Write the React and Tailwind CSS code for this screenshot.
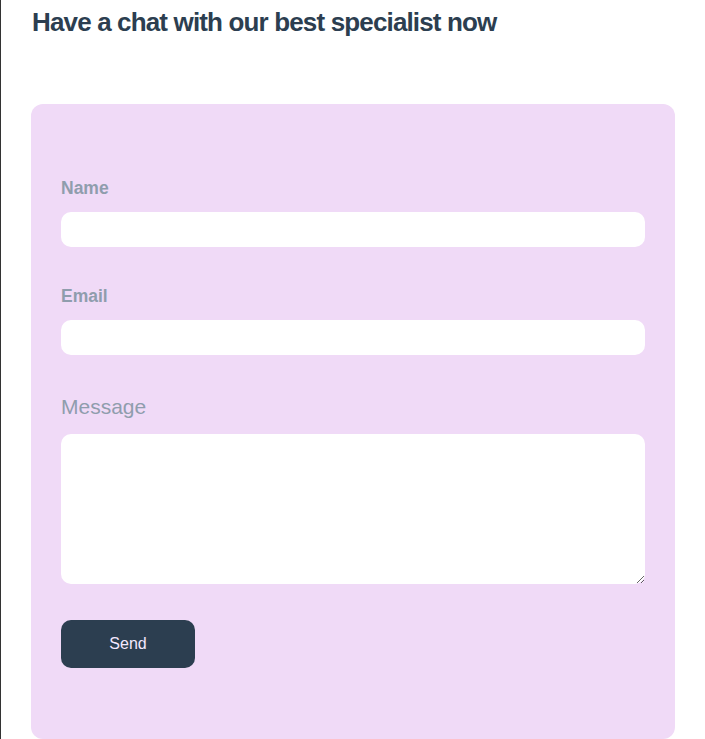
export default function App() {
  return (
    <div
      className="min-h-[739px] border-l border-[#333] pl-[30px] pr-[30px] pt-[7px] bg-white"
      style={{ fontFamily: '"Liberation Sans", Arial, sans-serif' }}
    >
      <h1 className="pl-[1px] text-[26px] font-bold text-[#2c3e50] tracking-[-0.85px] leading-[30px]">
        Have a chat with our best specialist now
      </h1>

      <form className="mt-[67px] w-[644px] rounded-xl bg-[#f0daf7] px-[30px] pt-[74px] pb-[71px] flex flex-col">
        <label className="text-[17.5px] font-bold text-[#8f9dad] leading-[20px]">Name</label>
        <input type="text" className="mt-[14px] h-[35px] w-full rounded-[10px] bg-white px-3 outline-none" />

        <label className="mt-[39px] text-[17.5px] font-bold text-[#8f9dad] leading-[20px]">Email</label>
        <input type="email" className="mt-[14px] h-[35px] w-full rounded-[10px] bg-white px-3 outline-none" />

        <label className="mt-[40px] text-[21px] text-[#8f9dad] leading-[24px]">Message</label>
        <textarea className="mt-[15px] h-[150px] w-full rounded-[10px] bg-white px-3 py-2 outline-none" />

        <button
          type="button"
          className="mt-[36px] h-[48px] w-[134px] rounded-[10px] bg-[#2c3e50] text-[16px] text-[#f3e8ff]"
        >
          Send
        </button>
      </form>
    </div>
  );
}
